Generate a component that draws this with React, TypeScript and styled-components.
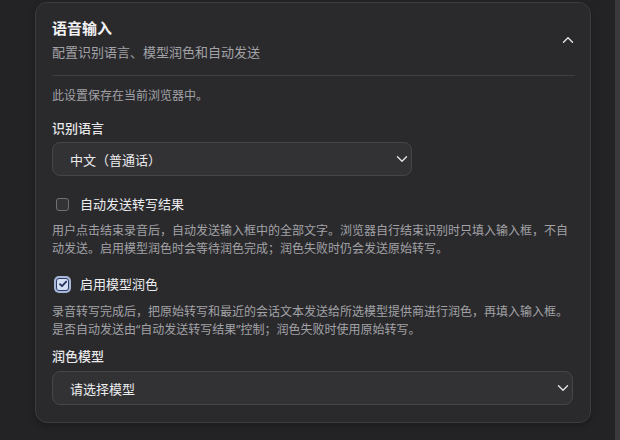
import React, { useState } from 'react';
import styled, { createGlobalStyle } from 'styled-components';

const GlobalStyle = createGlobalStyle`
  html, body {
    margin: 0;
    padding: 0;
    background: #232325;
  }
  body {
    font-family: 'Noto Sans', 'Noto Sans CJK SC', sans-serif;
    color: #ececee;
    -webkit-font-smoothing: antialiased;
  }
`;

const Chevron = ({ dir }: { dir: 'up' | 'down' }) => (
  <svg width="12" height="8" viewBox="0 0 12 8" fill="none">
    <path
      d={dir == 'up' ? 'M1.5 6.2L6 1.8l4.5 4.4' : 'M1.5 1.8L6 6.2l4.5-4.4'}
      stroke="#e4e4e6"
      strokeWidth="1.4"
      strokeLinecap="round"
      strokeLinejoin="round"
    />
  </svg>
);

interface ISelect {
  value: string;
  narrow?: boolean;
}

const Select = ({ value, narrow }: ISelect) => (
  <SelectBox $narrow={narrow}>
    <span>{value}</span>
    <Chevron dir="down" />
  </SelectBox>
);

interface ICheck {
  label: string;
  checked: boolean;
  onToggle: () => void;
}

const CheckOption = ({ label, checked, onToggle }: ICheck) => (
  <CheckRow onClick={onToggle}>
    <CheckBox $checked={checked}>
      {checked && (
        <svg width="10" height="10" viewBox="0 0 10 10" fill="none">
          <path
            d="M2 5.2l2 2L8.2 2.6"
            stroke="#22325a"
            strokeWidth="1.8"
            strokeLinecap="round"
            strokeLinejoin="round"
          />
        </svg>
      )}
    </CheckBox>
    <CheckLabel>{label}</CheckLabel>
  </CheckRow>
);

export default function App() {
  const [autoSend, setAutoSend] = useState(false);
  const [polish, setPolish] = useState(true);

  return (
    <>
      <GlobalStyle />
      <Page>
        <Main>
          <Card>
            <Header>
              <div>
                <Title>语音输入</Title>
                <Subtitle>配置识别语言、模型润色和自动发送</Subtitle>
              </div>
              <CollapseButton>
                <Chevron dir="up" />
              </CollapseButton>
            </Header>
            <Body>
              <Note>此设置保存在当前浏览器中。</Note>
              <FieldLabel $top={13}>识别语言</FieldLabel>
              <Field $top={4}>
                <Select value="中文（普通话）" narrow />
              </Field>
              <Field $top={18}>
                <CheckOption label="自动发送转写结果" checked={autoSend} onToggle={() => setAutoSend(!autoSend)} />
              </Field>
              <Hint $top={8}>
                用户点击结束录音后，自动发送输入框中的全部文字。浏览器自行结束识别时只填入输入框，不自动发送。启用模型润色时会等待润色完成；润色失败时仍会发送原始转写。
              </Hint>
              <Field $top={16}>
                <CheckOption label="启用模型润色" checked={polish} onToggle={() => setPolish(!polish)} />
              </Field>
              <Hint $top={9}>
                录音转写完成后，把原始转写和最近的会话文本发送给所选模型提供商进行润色，再填入输入框。
                <br />
                是否自动发送由“自动发送转写结果”控制；润色失败时使用原始转写。
              </Hint>
              <FieldLabel $top={7}>润色模型</FieldLabel>
              <Field $top={5}>
                <Select value="请选择模型" />
              </Field>
            </Body>
          </Card>
        </Main>
        <ScrollTrack />
      </Page>
    </>
  );
}

const Page = styled.div`
  display: flex;
  width: 620px;
  height: 440px;
  overflow: hidden;
`;

const Main = styled.div`
  flex: 1;
  padding: 2px 0 0 35px;
`;

const ScrollTrack = styled.div`
  width: 5px;
  background: #3a3a3d;
`;

const Card = styled.section`
  width: 556px;
  box-sizing: border-box;
  background: #2a2a2d;
  border: 1px solid #3c3c3f;
  border-radius: 12px;
  padding: 0 15px 17px 16px;
  box-shadow: 0 2px 6px rgba(0, 0, 0, 0.25);
`;

const Header = styled.div`
  display: flex;
  align-items: center;
  justify-content: space-between;
  padding: 14px 0 13px;
  border-bottom: 1px solid #3f3f43;
`;

const Title = styled.div`
  font-size: 15px;
  line-height: 22px;
  font-weight: 700;
  color: #f2f2f4;
`;

const Subtitle = styled.div`
  margin-top: 3px;
  font-size: 13px;
  line-height: 20px;
  color: #a2a2a6;
`;

const CollapseButton = styled.div`
  display: flex;
  align-items: center;
  justify-content: center;
  margin-right: 1px;
`;

const Body = styled.div`
  padding-top: 11px;
`;

const Note = styled.div`
  font-size: 12px;
  line-height: 18px;
  color: #a2a2a6;
`;

const FieldLabel = styled.div<{ $top: number }>`
  margin-top: ${({ $top }) => $top}px;
  font-size: 13px;
  line-height: 20px;
  font-weight: 500;
  color: #e8e8ea;
`;

const Field = styled.div<{ $top: number }>`
  margin-top: ${({ $top }) => $top}px;
`;

const SelectBox = styled.div<{ $narrow?: boolean }>`
  display: flex;
  align-items: center;
  justify-content: space-between;
  box-sizing: border-box;
  width: ${({ $narrow }) => ($narrow ? '360px' : '521px')};
  height: 34px;
  padding: 0 3px 0 17px;
  background: #323235;
  border: 1px solid #46464a;
  border-radius: 8px;
  font-size: 13px;
  color: #ececee;
`;

const CheckRow = styled.label`
  display: flex;
  align-items: center;
  height: 20px;
  padding-left: 4px;
  cursor: pointer;
`;

const CheckBox = styled.span<{ $checked: boolean }>`
  display: flex;
  align-items: center;
  justify-content: center;
  box-sizing: border-box;
  width: 13px;
  height: 13px;
  border-radius: 3px;
  border: 1px solid ${({ $checked }) => ($checked ? '#2c3c66' : '#707075')};
  background: ${({ $checked }) => ($checked ? '#d3def5' : '#333336')};
  box-shadow: ${({ $checked }) => ($checked ? '0 0 0 2px #a8b6d8' : 'none')};
`;

const CheckLabel = styled.span`
  margin-left: 11px;
  font-size: 13px;
  line-height: 20px;
  color: #ececee;
`;

const Hint = styled.p<{ $top: number }>`
  margin: ${({ $top }) => $top}px 0 0;
  font-size: 12px;
  line-height: 18px;
  color: #a2a2a6;
`;
